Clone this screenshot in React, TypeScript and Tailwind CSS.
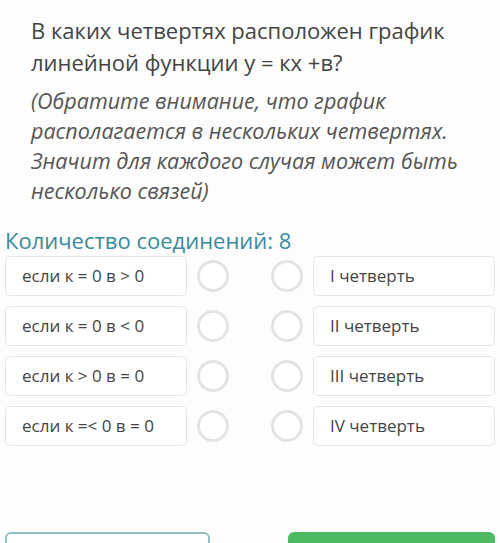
import React from 'react';

const rows = [
  { left: 'если к = 0 в > 0', right: 'I четверть' },
  { left: 'если к = 0 в < 0', right: 'II четверть' },
  { left: 'если к > 0 в = 0', right: 'III четверть' },
  { left: 'если к =< 0 в = 0', right: 'IV четверть' },
];

const Dot = () => (
  <div className="w-[32px] h-[32px] rounded-full border-[3px] border-[#e3e3e3] bg-white shrink-0" />
);

export default function App() {
  return (
    <div
      className="w-[500px] h-[543px] overflow-hidden bg-[#fdfdfd] text-[#444]"
      style={{ fontFamily: '"Open Sans", "Noto Sans", sans-serif' }}
    >
      <div className="pl-[31px] pr-4 pt-[14px]">
        <p className="text-[22px] leading-[32px]">
          В каких четвертях расположен график линейной функции у = кх +в?
        </p>
        <p className="mt-[8px] text-[21.5px] leading-[30px] italic text-[#555]">
          (Обратите внимание, что график располагается в нескольких четвертях. Значит для каждого случая может быть несколько связей)
        </p>
      </div>

      <div className="px-[5px] mt-[20px]">
        <div className="text-[22px] leading-[28px] text-[#3a8a9b]">Количество соединений: 8</div>
        <div className="mt-[2px] flex flex-col gap-[10px]">
          {rows.map((r, i) => (
            <div key={i} className="flex items-center h-[40px]">
              <div className="w-[182px] h-full flex items-center pl-[16px] bg-white border border-[#e6e6e6] rounded-[5px] text-[17px]">
                {r.left}
              </div>
              <div className="ml-[10px]"><Dot /></div>
              <div className="ml-[42px]"><Dot /></div>
              <div className="ml-[10px] flex-1 h-full flex items-center pl-[16px] bg-white border border-[#e6e6e6] rounded-[5px] text-[17px]">
                {r.right}
              </div>
            </div>
          ))}
        </div>
      </div>

      <div className="px-[5px] mt-[86px] flex justify-between">
        <div className="w-[205px] h-[40px] border-2 border-[#8fbfbf] rounded-[6px] bg-white" />
        <div className="w-[207px] h-[40px] rounded-[6px] bg-[#4cb963]" />
      </div>
    </div>
  );
}
